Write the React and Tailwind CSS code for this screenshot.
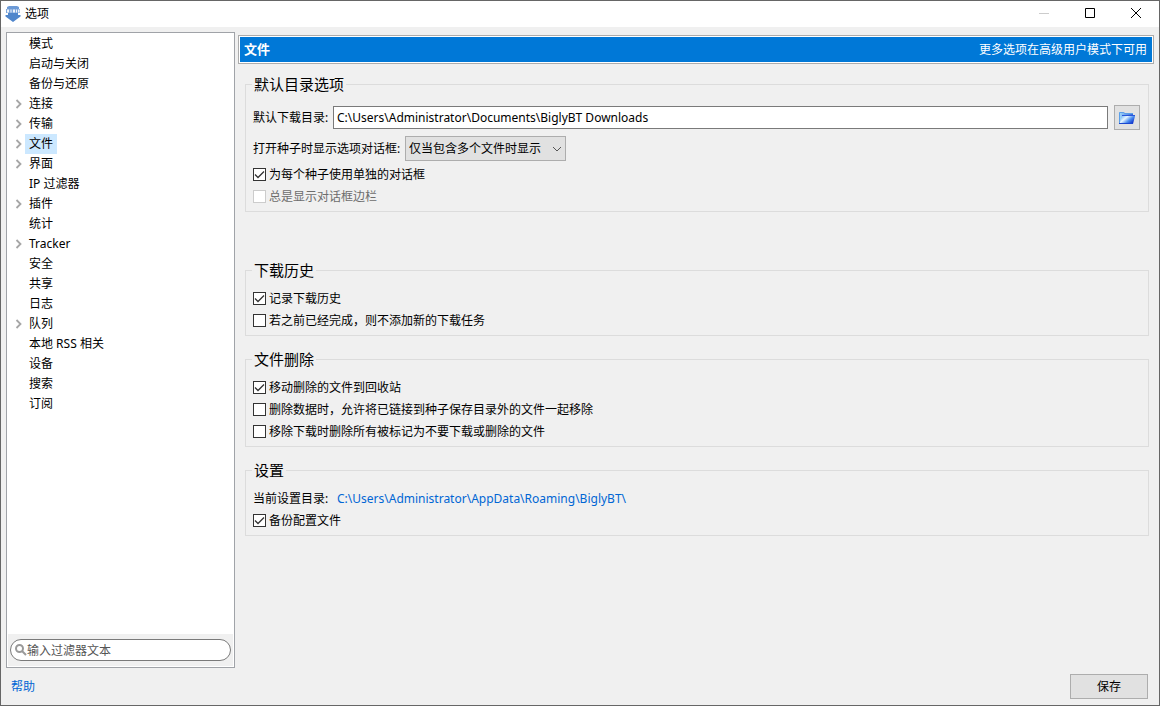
import { useState } from "react";

const sections = [
  { name: "模式" },
  { name: "启动与关闭" },
  { name: "备份与还原" },
  { name: "连接", expandable: true },
  { name: "传输", expandable: true },
  { name: "文件", expandable: true },
  { name: "界面", expandable: true },
  { name: "IP 过滤器" },
  { name: "插件", expandable: true },
  { name: "统计" },
  { name: "Tracker", expandable: true },
  { name: "安全" },
  { name: "共享" },
  { name: "日志" },
  { name: "队列", expandable: true },
  { name: "本地 RSS 相关" },
  { name: "设备" },
  { name: "搜索" },
  { name: "订阅" },
];

function AppIcon() {
  return (
    <svg className="w-4 h-4" viewBox="0 0 16 16">
      <path d="M4 0h8l2 1v2H2V1z" fill="#6c9ad6" />
      <path d="M1 3h14v4H1z" fill="#7ea6db" />
      <path
        d="M2 3.500h2v3H2zM5.500 3.500h1v3h-1zM8 3.500h2v3H8zM11 3.500h1v3h-1zM13 3.500h1.500v3H13z"
        fill="#eef4fb"
      />
      <path d="M3 7h10v2h2.500v1.500L8 16 0.500 10.500V9H3z" fill="#4f86cc" />
    </svg>
  );
}

function FolderIcon() {
  return (
    <svg className="w-4 h-4" viewBox="0 0 16 16">
      <defs>
        <linearGradient id="folder-back" x1="0" y1="0" x2="1" y2="0">
          <stop offset="0" stopColor="#a6dcfb" />
          <stop offset="1" stopColor="#2f62dc" />
        </linearGradient>
        <linearGradient id="folder-front" x1="0" y1="0" x2="1" y2="0.600">
          <stop offset="0" stopColor="#58a8f5" />
          <stop offset="0.400" stopColor="#e6f5ff" />
          <stop offset="0.700" stopColor="#4a8df0" />
          <stop offset="1" stopColor="#1233cc" />
        </linearGradient>
      </defs>
      <path d="M0 2h5l1 1h8v10H0z" fill="url(#folder-back)" />
      <path d="M0.500 13V2.500h4l1 1H14" fill="none" stroke="#5b9fe8" />
      <path d="M3 6h13l-2 8H0.500z" fill="url(#folder-front)" />
      <path d="M3 5.500h13" stroke="#2a56d8" />
      <path d="M0 13.500h14" stroke="#1a46d0" />
    </svg>
  );
}

function TitleBar() {
  return (
    <header className="flex items-center h-[26px] bg-white pl-1">
      <AppIcon />
      <h1 className="flex-1 pl-1 pb-0.5">选项</h1>
      <button
        aria-label="最小化"
        disabled
        className="w-[46px] h-full flex items-center justify-center text-[#cccccc]"
      >
        <svg className="w-[10px] h-[10px]" viewBox="0 0 10 10">
          <path d="M0 4.500h10" stroke="currentColor" />
        </svg>
      </button>
      <button
        aria-label="最大化"
        className="w-[46px] h-full flex items-center justify-center pb-0.5"
      >
        <svg className="w-[10px] h-[10px]" viewBox="0 0 10 10" fill="none">
          <path d="M0.500 0.500h9v9h-9z" stroke="currentColor" />
        </svg>
      </button>
      <button
        aria-label="关闭"
        className="w-[46px] h-full flex items-center justify-center pb-0.5"
      >
        <svg className="w-[10px] h-[10px]" viewBox="0 0 10 10">
          <path d="M0 0l10 10M10 0L0 10" stroke="currentColor" />
        </svg>
      </button>
    </header>
  );
}

function Sidebar({ selected, onSelect }) {
  return (
    <aside className="w-[229px] shrink-0 flex flex-col bg-white border border-[#a0a3a8] p-px">
      <ul className="flex-1">
        {sections.map(({ name, expandable }) => (
          <li key={name} className="flex items-center h-5 pl-[7px]">
            <span className="w-[10px]">
              {expandable && (
                <svg
                  className="w-2 h-[10px]"
                  viewBox="0 0 8 10"
                  fill="none"
                  stroke="#a6a6a6"
                  strokeWidth="1.800"
                >
                  <path d="M1.500 1l4 4-4 4" />
                </svg>
              )}
            </span>
            <button
              onClick={() => onSelect(name)}
              className={`h-5 px-1 pb-0.5 ${
                selected === name ? "bg-[#cce8ff]" : ""
              }`}
            >
              {name}
            </button>
          </li>
        ))}
      </ul>
      {/* Filter box */}
      <div className="bg-[#f0f0f0] px-0.5 py-[5px]">
        <label className="flex items-center h-[22px] pl-1 pr-2 rounded-full border border-[#7a7a7a] bg-white">
          <svg
            className="w-3 h-3 shrink-0"
            viewBox="0 0 12 12"
            fill="none"
            stroke="#999999"
            strokeWidth="2"
          >
            <circle cx="4.500" cy="4.500" r="3.500" />
            <path d="M7 7l4 4" />
          </svg>
          <input
            type="text"
            aria-label="过滤器"
            placeholder="输入过滤器文本"
            className="flex-1 min-w-0 outline-none placeholder:text-[#555555]"
          />
        </label>
      </div>
    </aside>
  );
}

function Group({ title, className = "", children }) {
  return (
    <fieldset
      className={`min-w-0 border border-[#dcdcdc] pl-[7px] pr-2 pb-2 ${className}`}
    >
      <legend className="-ml-px px-0.5 text-[15px] leading-5">{title}</legend>
      {children}
    </fieldset>
  );
}

function Checkbox({ label, defaultChecked, disabled }) {
  return (
    <label
      className={`flex items-center gap-[3px] h-[13px] ${
        disabled ? "text-[#6d6d6d]" : ""
      }`}
    >
      <span className="grid">
        <input
          type="checkbox"
          defaultChecked={defaultChecked}
          disabled={disabled}
          className="peer col-start-1 row-start-1 appearance-none w-[13px] h-[13px] border border-[#333333] bg-white disabled:border-[#cccccc]"
        />
        <svg
          className="col-start-1 row-start-1 w-[13px] h-[13px] pointer-events-none hidden peer-checked:block"
          viewBox="0 0 13 13"
          fill="none"
          stroke="#333333"
          strokeWidth="1.300"
        >
          <path d="M2 6.500l3 3 6-6" />
        </svg>
      </span>
      {label}
    </label>
  );
}

function App() {
  const [selected, setSelected] = useState("文件");

  return (
    <div className="min-h-screen flex flex-col border border-[#666666] bg-[#f0f0f0] text-black text-[12px] leading-[13px] font-['Noto_Sans','Noto_Sans_CJK_SC',sans-serif]">
      <TitleBar />

      <div className="flex-1 flex gap-[3px] pt-[5px] pl-[5px] pr-[5px]">
        <Sidebar selected={selected} onSelect={setSelected} />

        <main className="flex-1 min-w-0 pt-[3px]">
          <div className="border border-[#acacac] bg-white p-px">
            <div className="flex items-center justify-between h-[25px] pl-1 pr-[5px] bg-[#0078d7] text-white">
              <h2 className="text-[13px] font-bold">文件</h2>
              <span>更多选项在高级用户模式下可用</span>
            </div>
          </div>

          <div className="flex flex-col gap-[13px] pt-[10px] pl-[7px] pr-[5px]">
            <Group title="默认目录选项" className="mb-[35px]">
              <div className="flex items-center pt-[11px]">
                <label htmlFor="save-path" className="w-20 shrink-0">
                  默认下载目录:
                </label>
                <input
                  id="save-path"
                  type="text"
                  defaultValue="C:\Users\Administrator\Documents\BiglyBT Downloads"
                  className="flex-1 min-w-0 h-[23px] px-[3px] mr-1.5 border border-[#7a7a7a] bg-white outline-none"
                />
                <button
                  aria-label="浏览"
                  className="w-[26px] h-[25px] flex items-center justify-center border border-[#adadad] bg-[#e1e1e1]"
                >
                  <FolderIcon />
                </button>
              </div>
              <div className="flex items-center mt-1.5 mb-[7px]">
                <label htmlFor="open-dialog" className="w-[152px] shrink-0">
                  打开种子时显示选项对话框:
                </label>
                <div className="grid items-center">
                  <select
                    id="open-dialog"
                    className="col-start-1 row-start-1 appearance-none w-[161px] h-[25px] px-[3px] border border-[#adadad] bg-[#e1e1e1] outline-none"
                  >
                    <option>仅当包含多个文件时显示</option>
                  </select>
                  <svg
                    className="col-start-1 row-start-1 justify-self-end mr-1 w-[10px] h-[10px] pointer-events-none"
                    viewBox="0 0 10 10"
                    fill="none"
                    stroke="#555555"
                  >
                    <path d="M1 3l4 4 4-4" />
                  </svg>
                </div>
              </div>
              <div className="flex flex-col items-start gap-[9px]">
                <Checkbox label="为每个种子使用单独的对话框" defaultChecked />
                <Checkbox label="总是显示对话框边栏" disabled />
              </div>
            </Group>

            <Group title="下载历史">
              <div className="flex flex-col items-start gap-[9px] pt-3">
                <Checkbox label="记录下载历史" defaultChecked />
                <Checkbox label="若之前已经完成，则不添加新的下载任务" />
              </div>
            </Group>

            <Group title="文件删除">
              <div className="flex flex-col items-start gap-[9px] pt-3">
                <Checkbox label="移动删除的文件到回收站" defaultChecked />
                <Checkbox label="删除数据时，允许将已链接到种子保存目录外的文件一起移除" />
                <Checkbox label="移除下载时删除所有被标记为不要下载或删除的文件" />
              </div>
            </Group>

            <Group title="设置">
              <div className="flex flex-col items-start gap-[9px] pt-3">
                <p className="flex">
                  <span className="w-[84px]">当前设置目录:</span>
                  <a href="#config" className="text-[#0066d4]">
                    C:\Users\Administrator\AppData\Roaming\BiglyBT\
                  </a>
                </p>
                <Checkbox label="备份配置文件" defaultChecked />
              </div>
            </Group>
          </div>
        </main>
      </div>

      <footer className="flex items-center justify-between h-[37px] pl-[10px] pr-[11px]">
        <a href="#help" className="text-[#0066d4]">
          帮助
        </a>
        <button className="w-[78px] h-[25px] border border-[#adadad] bg-[#e1e1e1]">
          保存
        </button>
      </footer>
    </div>
  );
}

export default App;
